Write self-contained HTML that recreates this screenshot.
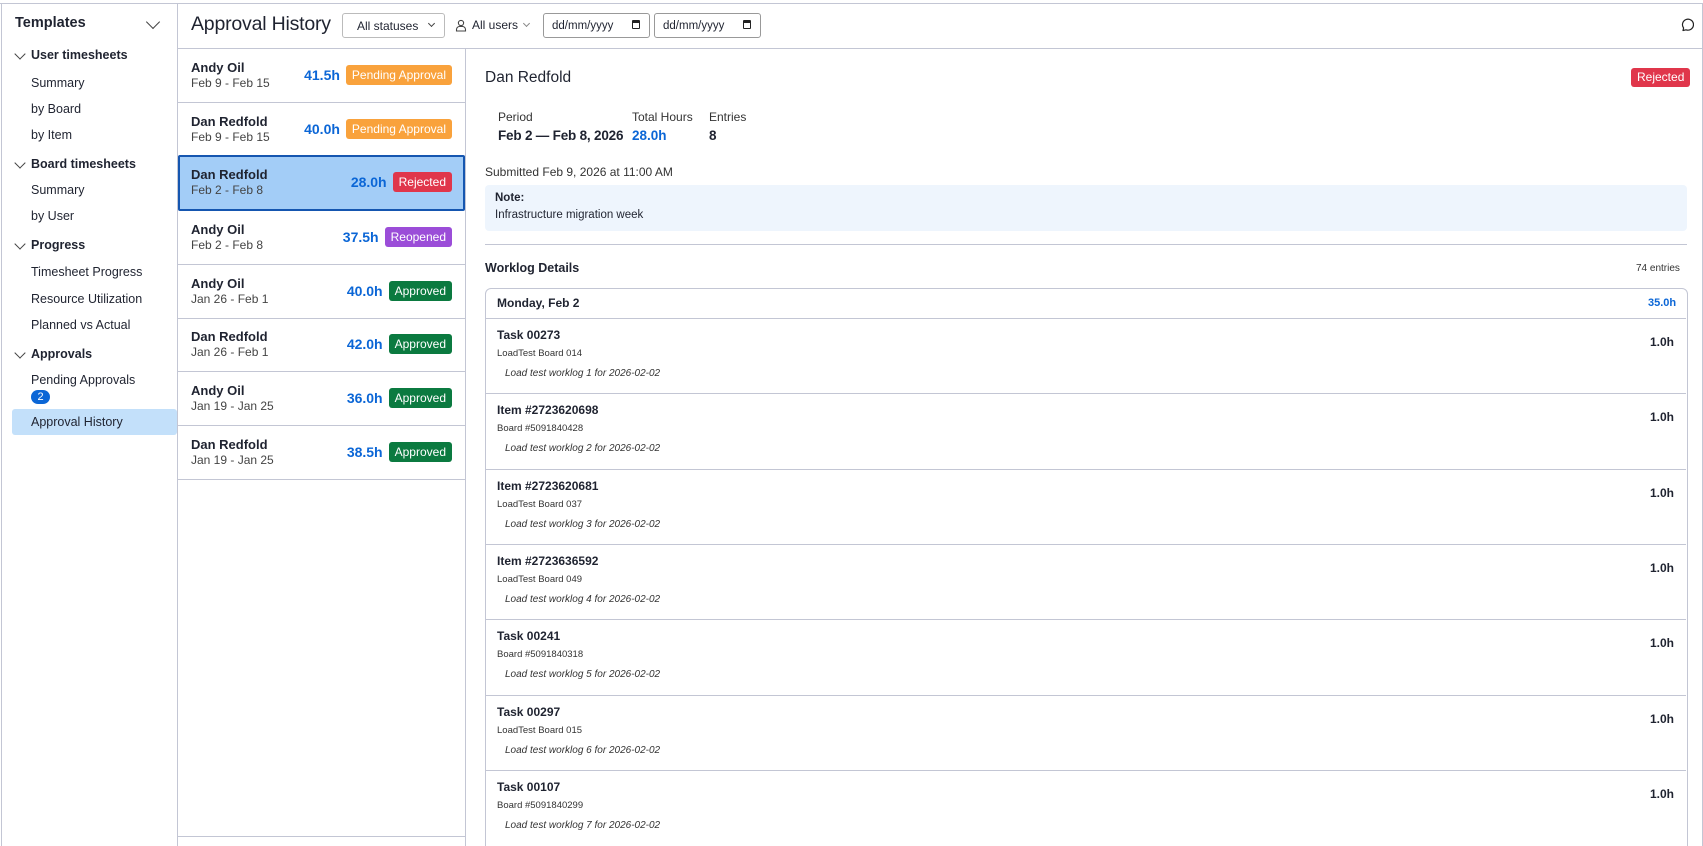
<!DOCTYPE html>
<html><head><meta charset="utf-8"><style>
*{box-sizing:border-box;margin:0;padding:0}
html{width:1703px;height:846px;overflow:hidden}
body{width:1703px;height:846px;overflow:hidden;background:#fff;font-family:"Liberation Sans",Arial,sans-serif;color:#1f2330;position:relative}
.a{position:absolute;white-space:nowrap}
.b{font-weight:bold}
.sb{font-size:12.5px;color:#1f2330}
.hd{font-size:12.5px;font-weight:bold}
.chev{position:absolute;width:8px;height:8px;border-right:1.3px solid #444;border-bottom:1.3px solid #444;transform:rotate(45deg)}
.item{position:absolute;left:178px;width:287px;height:54px;border-bottom:1px solid #c3c6d4}
.item .n{position:absolute;left:13px;top:11px;font-size:13px;font-weight:bold}
.item .d{position:absolute;left:13px;top:27px;font-size:12px;color:#444}
.item .r{position:absolute;right:13px;top:16px;display:flex;align-items:center;gap:6px}
.item .h{font-size:14px;font-weight:bold;color:#0b66d6}
.badge{height:20px;line-height:20px;padding:0 6px;border-radius:3px;color:#fff;font-size:12px}
.pa{background:#f9a23c}.rj{background:#e0364b}.ro{background:#9b4dd8}.ap{background:#0b7a40}
.ent{position:absolute;left:486px;width:1200px;height:75.5px;border-top:1px solid #c3c6d4}
.ent .t{position:absolute;left:11px;top:9px;font-size:12px;font-weight:bold}
.ent .s{position:absolute;left:11px;top:29px;font-size:9.5px;color:#333}
.ent .i{position:absolute;left:19px;top:49px;font-size:10px;font-style:italic;color:#333}
.ent .h{position:absolute;right:12px;top:16px;font-size:12px;font-weight:bold}
</style></head><body>
<div class="a" style="left:0;top:3px;width:1703px;height:1px;background:#c3c6d4"></div>
<div class="a" style="left:1px;top:3px;width:1px;height:843px;background:#c3c6d4"></div>
<div class="a" style="left:177px;top:3px;width:1px;height:843px;background:#c3c6d4"></div>
<div class="a" style="left:1702px;top:3px;width:1px;height:843px;background:#c3c6d4"></div>
<!-- sidebar -->
<div class="a b" style="left:15px;top:15px;font-size:14.5px">Templates</div>
<div class="chev" style="left:148px;top:17px;width:10px;height:10px"></div>
<div class="chev" style="left:16px;top:50px"></div><div class="a hd" style="left:31px;top:48px">User timesheets</div>
<div class="a sb" style="left:31px;top:76px">Summary</div>
<div class="a sb" style="left:31px;top:102px">by Board</div>
<div class="a sb" style="left:31px;top:128px">by Item</div>
<div class="chev" style="left:16px;top:159px"></div><div class="a hd" style="left:31px;top:157px">Board timesheets</div>
<div class="a sb" style="left:31px;top:183px">Summary</div>
<div class="a sb" style="left:31px;top:209px">by User</div>
<div class="chev" style="left:16px;top:240px"></div><div class="a hd" style="left:31px;top:238px">Progress</div>
<div class="a sb" style="left:31px;top:265px">Timesheet Progress</div>
<div class="a sb" style="left:31px;top:292px">Resource Utilization</div>
<div class="a sb" style="left:31px;top:318px">Planned vs Actual</div>
<div class="chev" style="left:16px;top:349px"></div><div class="a hd" style="left:31px;top:347px">Approvals</div>
<div class="a sb" style="left:31px;top:373px">Pending Approvals</div>
<div class="a" style="left:31px;top:390px;width:19px;height:14px;border-radius:7px;background:#0b66d6;color:#fff;font-size:11px;text-align:center;line-height:14px">2</div>
<div class="a" style="left:12px;top:409px;width:165px;height:26px;background:#c3e0fa;border-radius:3px"></div>
<div class="a sb" style="left:31px;top:415px">Approval History</div>
<!-- header -->
<div class="a" style="left:191px;top:13px;font-size:19.5px;color:#1f2330;letter-spacing:-0.2px">Approval History</div>
<div class="a" style="left:342px;top:13px;width:103px;height:25px;border:1px solid #bbb;border-radius:3px;font-size:12px;padding:5px 0 0 14px">All statuses</div>
<div class="chev" style="left:429px;top:21px;width:5px;height:5px"></div>
<svg class="a" style="left:455px;top:19px" width="12" height="13" viewBox="0 0 12 13"><circle cx="6" cy="4" r="2.6" fill="none" stroke="#444" stroke-width="1.1"/><path d="M1.5 12v-1.5a3 3 0 0 1 3-3h3a3 3 0 0 1 3 3V12z" fill="none" stroke="#444" stroke-width="1.1"/></svg>
<div class="a" style="left:472px;top:18px;font-size:12px">All users</div>
<div class="chev" style="left:524px;top:21px;width:5px;height:5px;border-color:#888"></div>
<div class="a" style="left:543px;top:13px;width:107px;height:25px;border:1px solid #999;border-radius:3px;font-size:11.5px;padding:6px 0 0 8px">dd/mm/yyyy</div>
<div class="a" style="left:632px;top:20px;width:8px;height:9px;border:1.3px solid #222;border-top-width:3px;border-radius:1px"></div>
<div class="a" style="left:654px;top:13px;width:107px;height:25px;border:1px solid #999;border-radius:3px;font-size:11.5px;padding:6px 0 0 8px">dd/mm/yyyy</div>
<div class="a" style="left:743px;top:20px;width:8px;height:9px;border:1.3px solid #222;border-top-width:3px;border-radius:1px"></div>
<svg class="a" style="left:1680px;top:18px" width="14" height="14" viewBox="0 0 14 14"><path d="M3 12.5 3.6 10A5.5 5.5 0 1 1 6 11.8z" fill="none" stroke="#222" stroke-width="1.2" stroke-linejoin="round"/></svg>
<div class="a" style="left:178px;top:48px;width:1524px;height:1px;background:#c3c6d4"></div>
<!-- list -->
<div class="a" style="left:465px;top:48px;width:1px;height:798px;background:#c3c6d4"></div>
<div class="item" style="top:49px"><div class="n">Andy Oil</div><div class="d">Feb 9 - Feb 15</div><div class="r"><span class="h">41.5h</span><span class="badge pa">Pending Approval</span></div></div>
<div class="item" style="top:103px"><div class="n">Dan Redfold</div><div class="d">Feb 9 - Feb 15</div><div class="r"><span class="h">40.0h</span><span class="badge pa">Pending Approval</span></div></div>
<div class="item" style="top:155px;height:56px;background:#a3cdf7;border:2px solid #1556b0;border-radius:2px"><div class="n" style="left:11px;top:10px">Dan Redfold</div><div class="d" style="left:11px;top:26px">Feb 2 - Feb 8</div><div class="r" style="right:11px;top:15px"><span class="h">28.0h</span><span class="badge rj">Rejected</span></div></div>
<div class="item" style="top:211px"><div class="n">Andy Oil</div><div class="d">Feb 2 - Feb 8</div><div class="r"><span class="h">37.5h</span><span class="badge ro">Reopened</span></div></div>
<div class="item" style="top:265px"><div class="n">Andy Oil</div><div class="d">Jan 26 - Feb 1</div><div class="r"><span class="h">40.0h</span><span class="badge ap">Approved</span></div></div>
<div class="item" style="top:318px"><div class="n">Dan Redfold</div><div class="d">Jan 26 - Feb 1</div><div class="r"><span class="h">42.0h</span><span class="badge ap">Approved</span></div></div>
<div class="item" style="top:372px"><div class="n">Andy Oil</div><div class="d">Jan 19 - Jan 25</div><div class="r"><span class="h">36.0h</span><span class="badge ap">Approved</span></div></div>
<div class="item" style="top:426px"><div class="n">Dan Redfold</div><div class="d">Jan 19 - Jan 25</div><div class="r"><span class="h">38.5h</span><span class="badge ap">Approved</span></div></div>
<div class="a" style="left:178px;top:836px;width:287px;height:1px;background:#c3c6d4"></div>
<!-- detail -->
<div class="a" style="left:485px;top:69px;font-size:15.5px">Dan Redfold</div>
<div class="a rj" style="left:1631px;top:68px;height:19px;line-height:19px;padding:0 6px;border-radius:3px;color:#fff;font-size:12px">Rejected</div>
<div class="a" style="left:498px;top:110px;font-size:12px;color:#333">Period</div>
<div class="a b" style="left:498px;top:128px;font-size:13.5px;letter-spacing:-0.2px">Feb 2 — Feb 8, 2026</div>
<div class="a" style="left:632px;top:110px;font-size:12px;color:#333">Total Hours</div>
<div class="a b" style="left:632px;top:128px;font-size:13.5px;color:#0b66d6">28.0h</div>
<div class="a" style="left:709px;top:110px;font-size:12px;color:#333">Entries</div>
<div class="a b" style="left:709px;top:128px;font-size:13.5px">8</div>
<div class="a" style="left:485px;top:165px;font-size:12px;color:#333">Submitted Feb 9, 2026 at 11:00 AM</div>
<div class="a" style="left:485px;top:185px;width:1202px;height:46px;background:#eef5fd;border-radius:4px"></div>
<div class="a b" style="left:495px;top:192px;font-size:11.5px">Note:</div>
<div class="a" style="left:495px;top:209px;font-size:11.5px">Infrastructure migration week</div>
<div class="a" style="left:485px;top:244px;width:1202px;height:1px;background:#c3c6d4"></div>
<div class="a b" style="left:485px;top:261px;font-size:12.5px">Worklog Details</div>
<div class="a" style="left:1636px;top:263px;font-size:10px;color:#333">74 entries</div>
<div class="a" style="left:485px;top:288px;width:1203px;height:570px;border:1px solid #c3c6d4;border-radius:6px"></div>
<div class="a b" style="left:497px;top:296px;font-size:12px">Monday, Feb 2</div>
<div class="a b" style="left:1648px;top:297px;font-size:11px;color:#0b66d6">35.0h</div>
<div class="ent" style="top:318px"><div class="t">Task 00273</div><div class="s">LoadTest Board 014</div><div class="i">Load test worklog 1 for 2026-02-02</div><div class="h">1.0h</div></div>
<div class="ent" style="top:393px"><div class="t">Item #2723620698</div><div class="s">Board #5091840428</div><div class="i">Load test worklog 2 for 2026-02-02</div><div class="h">1.0h</div></div>
<div class="ent" style="top:469px"><div class="t">Item #2723620681</div><div class="s">LoadTest Board 037</div><div class="i">Load test worklog 3 for 2026-02-02</div><div class="h">1.0h</div></div>
<div class="ent" style="top:544px"><div class="t">Item #2723636592</div><div class="s">LoadTest Board 049</div><div class="i">Load test worklog 4 for 2026-02-02</div><div class="h">1.0h</div></div>
<div class="ent" style="top:619px"><div class="t">Task 00241</div><div class="s">Board #5091840318</div><div class="i">Load test worklog 5 for 2026-02-02</div><div class="h">1.0h</div></div>
<div class="ent" style="top:695px"><div class="t">Task 00297</div><div class="s">LoadTest Board 015</div><div class="i">Load test worklog 6 for 2026-02-02</div><div class="h">1.0h</div></div>
<div class="ent" style="top:770px"><div class="t">Task 00107</div><div class="s">Board #5091840299</div><div class="i">Load test worklog 7 for 2026-02-02</div><div class="h">1.0h</div></div>
</body></html>
